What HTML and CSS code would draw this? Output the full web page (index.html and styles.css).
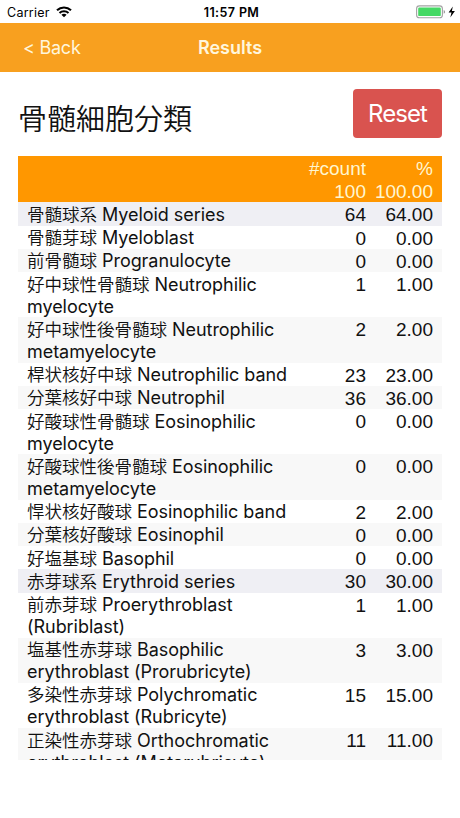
FILE: index.html
```html
<!DOCTYPE html>
<html lang="ja">

<head>
    <meta charset="UTF-8">
    <meta name="viewport" content="width=device-width, initial-scale=1.0">
    <title>Results</title>
    <link rel="stylesheet" href="styles.css">
</head>

<body>
    <div class="status">
        <div class="carrier">
            <span>Carrier</span>
            <svg class="wifi" width="16" height="12" viewBox="0 0 16 12">
                <path d="M1 4.3C5 .5 11 .5 15 4.3M3.5 6.9C6 4.6 10 4.6 12.5 6.9" fill="none" stroke="#000" stroke-width="2.1"/>
                <path d="M8 11.2L5.4 8.7Q8 6.7 10.6 8.7z"/>
            </svg>
        </div>
        <div class="time">11:57 PM</div>
        <div class="power">
            <svg width="40" height="14" viewBox="0 0 40 14">
                <rect x=".6" y=".9" width="25.8" height="11.8" rx="2.8" fill="#fff" stroke="#a2a2a2" stroke-width="1.1"/>
                <rect x="2.2" y="2.5" width="22.6" height="8.6" rx="1.2" fill="#45d964"/>
                <path d="M27.7 5v3.8q1.4-.7 1.4-1.9T27.7 5z" fill="#999"/>
                <path d="M36.8 1.6L32.6 7.6h2.9l-1.2 4.8 4.6-6.3h-3z"/>
            </svg>
        </div>
    </div>
    <div class="nav">
        <a class="back">&lt; Back</a>
        <h1>Results</h1>
    </div>
    <div class="main">
        <div class="top">
            <h2>骨髄細胞分類</h2>
            <button class="reset">Reset</button>
        </div>
        <!-- 一覧 -->
        <div class="scroll">
            <table class="list">
                <thead>
                    <tr><th class="name"></th><th class="count">#count</th><th class="rate">%</th></tr>
                    <tr><th></th><th>100</th><th>100.00</th></tr>
                </thead>
                <tbody>
                    <tr class="group"><td><i>骨髄球系</i> Myeloid series</td><td>64</td><td>64.00</td></tr>
                    <tr><td><i>骨髄芽球</i> Myeloblast</td><td>0</td><td>0.00</td></tr>
                    <tr><td><i>前骨髄球</i> Progranulocyte</td><td>0</td><td>0.00</td></tr>
                    <tr class="two"><td><i>好中球性骨髄球</i> Neutrophilic myelocyte</td><td>1</td><td>1.00</td></tr>
                    <tr class="two"><td><i>好中球性後骨髄球</i> Neutrophilic metamyelocyte</td><td>2</td><td>2.00</td></tr>
                    <tr><td><i>桿状核好中球</i> Neutrophilic band</td><td>23</td><td>23.00</td></tr>
                    <tr><td><i>分葉核好中球</i> Neutrophil</td><td>36</td><td>36.00</td></tr>
                    <tr class="two"><td><i>好酸球性骨髄球</i> Eosinophilic myelocyte</td><td>0</td><td>0.00</td></tr>
                    <tr class="two"><td><i>好酸球性後骨髄球</i> Eosinophilic metamyelocyte</td><td>0</td><td>0.00</td></tr>
                    <tr><td><i>悍状核好酸球</i> Eosinophilic band</td><td>2</td><td>2.00</td></tr>
                    <tr><td><i>分葉核好酸球</i> Eosinophil</td><td>0</td><td>0.00</td></tr>
                    <tr><td><i>好塩基球</i> Basophil</td><td>0</td><td>0.00</td></tr>
                    <tr class="group"><td><i>赤芽球系</i> Erythroid series</td><td>30</td><td>30.00</td></tr>
                    <tr class="two"><td><i>前赤芽球</i> Proerythroblast (Rubriblast)</td><td>1</td><td>1.00</td></tr>
                    <tr class="two"><td><i>塩基性赤芽球</i> Basophilic erythroblast (Prorubricyte)</td><td>3</td><td>3.00</td></tr>
                    <tr class="two"><td><i>多染性赤芽球</i> Polychromatic erythroblast (Rubricyte)</td><td>15</td><td>15.00</td></tr>
                    <tr class="two"><td><i>正染性赤芽球</i> Orthochromatic erythroblast (Metarubricyte)</td><td>11</td><td>11.00</td></tr>
                </tbody>
            </table>
        </div>
    </div>
</body>

</html>
```
FILE: styles.css
```css
* {
    box-sizing: border-box;
}
body {
    margin: 0;
    background: #fff;
    color: #111;
    font-family: Inter, "Noto Sans CJK JP", sans-serif;
}
/* ステータスバー */
.status {
    display: grid;
    grid-template-columns: 1fr auto 1fr;
    align-items: center;
    height: 22.5px;
    padding: 2px 4px 0 7px;
    font-size: 12.5px;
    color: #000;
}
.carrier {
    display: flex;
    align-items: center;
    gap: 6px;
    letter-spacing: .25px;
}
.time {
    font-weight: 600;
    letter-spacing: .4px;
}
.power {
    display: flex;
    justify-content: flex-end;
}
.nav {
    display: grid;
    grid-template-columns: 1fr auto 1fr;
    align-items: center;
    height: 49px;
    padding: 0 23px;
    background: #f8a01f;
    color: #fff6dc;
}
.nav .back {
    font-size: 18px;
    letter-spacing: -.25px;
}
.nav h1 {
    margin: 0;
    font-size: 18px;
    font-weight: 600;
}
.main {
    padding: 17.5px 18px 0;
}
.top {
    display: flex;
    justify-content: space-between;
    height: 66.7px;
}
.top h2 {
    margin: 10px 0 0;
    font-size: 29px;
    font-weight: 350;
    line-height: 42px;
}
.reset {
    width: 89px;
    height: 49px;
    padding: 0;
    border: 0;
    border-radius: 4px;
    background: #d9534f;
    color: #fff;
    font-family: Inter, sans-serif;
    font-size: 24px;
    letter-spacing: -.9px;
}
.scroll {
    height: 604.3px;
    overflow: hidden;
}
.list {
    display: block;
}
.list tr {
    display: grid;
    grid-template-columns: 280px 68px 67px;
    height: 23.3px;
    padding-right: 9px;
}
.list tr.two {
    height: 45.2px;
}
.list thead,
.list tbody {
    display: block;
}
.list td,
.list th {
    padding: 1px 0 0;
    font-family: "Liberation Sans", sans-serif;
    font-size: 19px;
    font-weight: 400;
    line-height: 24px;
    text-align: right;
}
.list td:first-child {
    padding: 1.4px 0 0 9px;
    font-family: Inter, "Noto Sans CJK JP", sans-serif;
    font-size: 18px;
    letter-spacing: -.05px;
    line-height: 22px;
    text-align: left;
}
.list i {
    font-family: "Noto Sans CJK JP", sans-serif;
    font-size: 17.5px;
    font-style: normal;
    font-weight: 350;
    letter-spacing: 0;
    line-height: 1;
}
.list thead {
    background: #ff9700;
    color: #fff6d0;
}
.list tbody tr:nth-child(odd) {
    background: #f8f8f8;
}
.list tbody tr:nth-child(even) {
    background: #fff;
}
.list tbody tr.group {
    background: #efeff4;
}
```
